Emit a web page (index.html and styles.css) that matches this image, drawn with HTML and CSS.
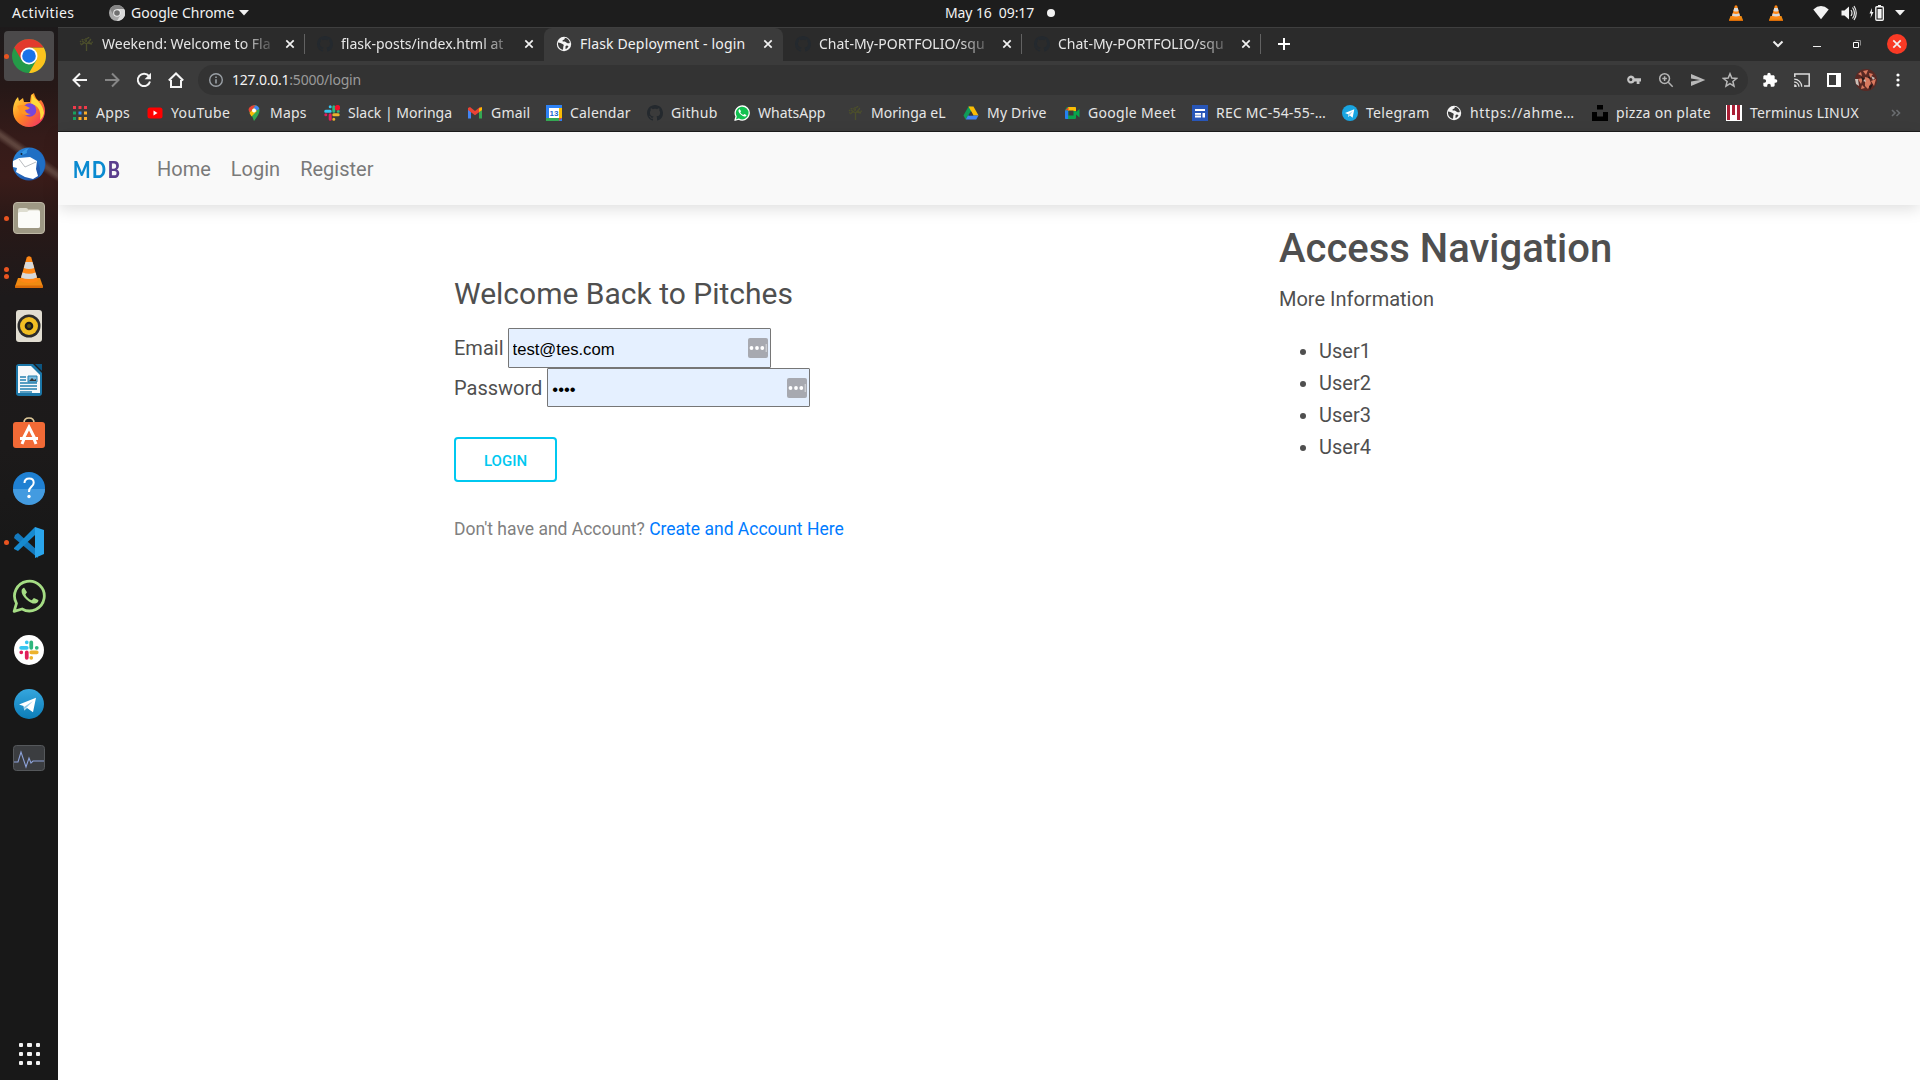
FILE: index.html
```html
<!DOCTYPE html>
<html lang="en">
<head>
<meta charset="utf-8">
<title>Flask Deployment - login</title>
<link rel="stylesheet" href="styles.css">
</head>
<body>
<svg class="defs" aria-hidden="true">
  <defs>
    <linearGradient id="gold" x1="0" y1="0" x2="1" y2="1"><stop offset="0" stop-color="#ffe94a"/><stop offset=".45" stop-color="#ff8a1f"/><stop offset="1" stop-color="#f0246f"/></linearGradient>
    <linearGradient id="sky" x1="0" y1="0" x2="0" y2="1"><stop offset="0" stop-color="#35a6de"/><stop offset="1" stop-color="#0c7db8"/></linearGradient>
    <linearGradient id="bird" x1="0" y1="0" x2="1" y2="1"><stop offset="0" stop-color="#2a8de0"/><stop offset="1" stop-color="#1c459c"/></linearGradient>
  </defs>
  <symbol id="close" viewBox="0 0 10 10"><path d="M1.3 1.3l7.4 7.4M8.7 1.3L1.3 8.7" stroke="currentColor" stroke-width="1.7"/></symbol>
  <symbol id="github" viewBox="0 0 16 16"><path fill="#24292e" d="M8 0C3.58 0 0 3.58 0 8c0 3.54 2.29 6.53 5.47 7.59.4.07.55-.17.55-.38 0-.19-.01-.82-.01-1.49-2.01.37-2.53-.49-2.69-.94-.09-.23-.48-.94-.82-1.13-.28-.15-.68-.52-.01-.53.63-.01 1.08.58 1.23.82.72 1.21 1.87.87 2.33.66.07-.52.28-.87.51-1.07-1.78-.2-3.64-.89-3.64-3.95 0-.87.31-1.59.82-2.15-.08-.2-.36-1.02.08-2.12 0 0 .67-.21 2.2.82.64-.18 1.32-.27 2-.27s1.36.09 2 .27c1.53-1.04 2.2-.82 2.2-.82.44 1.1.16 1.92.08 2.12.51.56.82 1.27.82 2.15 0 3.07-1.87 3.75-3.65 3.95.29.25.54.73.54 1.48 0 1.07-.01 1.93-.01 2.2 0 .21.15.46.55.38A8.01 8.01 0 0016 8c0-4.42-3.58-8-8-8z"/></symbol>
  <symbol id="palm" viewBox="0 0 16 16"><g fill="none" stroke="#4c4f2c" stroke-width="1.3"><path d="M8.5 15V8M8.5 8L4 5M8.5 8l4-4M8 6V2M3 9l3-2M14 8l-4-1"/><path stroke-dasharray="1.5 1" d="M2 6l3-3 3 2 2-4 3 3M2 8l3-1M11 7l4-1"/></g></symbol>
  <symbol id="globe" viewBox="0 0 16 16"><circle cx="8" cy="8" r="7.2" fill="#f5f5f5"/><path fill="#3b3b3b" d="M2 6.5c2 0 3 1 4.500 1.500 1.500.3 1.500 1.700.8 2.500l-.3 3.200C4 13.300 1.600 10.500 2 6.500zM8.500 1.800c1 1-.5 2-1.500 2.200-.8.500-.6 1.500.4 1.600 1.600-.2 2.600.6 3.600 1.400 1.100.6 2 .3 2.800 0-.1-2.600-2.300-5-5.300-5.200zM9.500 10.200c1-.9 2.200-.7 3 .2-.6 1.200-1.700 2.200-3 2.700z"/></symbol>
  <symbol id="vlc" viewBox="0 0 32 32"><path fill="#f08a12" d="M5 22h22l3 8.500q0 1.500-1.500 1.500h-25Q2 32 2 30.500z"/><path fill="#d96b08" d="M2 29.500h28v1q0 1.500-1.500 1.500h-25Q2 32 2 30.500z"/><path fill="#ff8715" d="M13.700 1.500Q16-1 18.300 1.500L25 25q-9 4-18 0z"/><path fill="#d8dadb" d="M12.500 6h7l1.700 6q-5.200 2-10.400 0zM9.500 16.500q6.500 2.500 13 0l1.500 5q-8 3-16 0z"/></symbol>
  <symbol id="slack" viewBox="0 0 16 16"><g stroke-width="3" stroke-linecap="round"><path stroke="#36c5f0" d="M1.700 6.200h4.500M6.200 1.800v.01"/><path stroke="#2eb67d" d="M9.800 1.800v4.400M14.200 6.200h.01"/><path stroke="#ecb22e" d="M9.800 9.800h4.400M9.800 14.200h.01"/><path stroke="#e01e5a" d="M6.200 9.800v4.400M1.800 9.800h.01"/></g></symbol>
  <symbol id="plane" viewBox="0 0 16 16"><circle cx="8" cy="8" r="8" fill="#19a5e1"/><path fill="#fff" d="M3 7.900l9.300-3.700-1.700 8.500-2.800-2.100-1.500 1.400-.3-2.700z"/><path fill="#9ed5f0" d="M6 9.300l4.800-3.400-3.200 4.500-1.300 1.600z"/></symbol>
  <symbol id="phone" viewBox="0 0 32 32"><path d="M2 30.500l2.200-7.600A14 14 0 1 1 9.500 28.200z" fill="var(--bubble,none)" stroke="var(--ring)" stroke-width="2.600" stroke-linejoin="round"/><path fill="var(--ring)" d="M11.500 8.300c-.8-.3-2.300 1.100-2.500 2.700-.3 2.500 1.600 5.400 4.600 8.200 3.300 3 6.800 4.600 9 3.700 1.700-.7 2.500-2 2.200-3.100l-4.200-2-2 2.300c-2.500-.8-5-3.200-6-5.600l1.500-2z"/></symbol>
</svg>

<header class="topbar">
  <span class="activities">Activities</span>
  <svg class="i16 app-ico" viewBox="0 0 16 16"><circle cx="8" cy="8" r="8" fill="#a8a8a8"/><path d="M8 4h7.200A8 8 0 018 16l3.500-6z" fill="#dadada"/><path d="M1 4a8 8 0 0114 0H8L4.500 10z" fill="#858585"/><circle cx="8" cy="8" r="3.800" fill="#eee"/><circle cx="8" cy="8" r="2.800" fill="#707070"/></svg>
  <span class="app-name">Google Chrome</span>
  <svg class="caret" viewBox="0 0 10 6"><path d="M0 0h10L5 5.500z" fill="#f2f2f2"/></svg>
  <span class="clock">May 16&nbsp; 09:17</span>
  <span class="dot"></span>
  <div class="tray">
    <svg class="i16"><use href="#vlc"/></svg>
    <svg class="i16"><use href="#vlc"/></svg>
    <svg class="i16" viewBox="0 0 16 16"><path d="M.3 4.500Q8-2.300 15.700 4.500L8 14.300z" fill="#f2f2f2"/></svg>
    <svg class="i16" viewBox="0 0 16 16"><path d="M.5 5.500h3L8 1.500v13l-4.500-4h-3z" fill="#f2f2f2"/><path d="M10 5q2 3 0 6M11.500 2.500q4 5.500 0 11M13 1q4.500 7 0 14" fill="none" stroke="#e6e6e6" stroke-width="1.200"/></svg>
    <svg class="i16" viewBox="0 0 16 16"><path d="M3 3L.5 8.500h1.700L1.500 13 4.500 7H2.800z" fill="#f2f2f2"/><rect x="6.800" y="1.800" width="7.500" height="13.400" rx="1" fill="none" stroke="#f2f2f2" stroke-width="1.400"/><path d="M9 0h3v2H9zM8.600 4h4v9.500h-4z" fill="#f2f2f2"/></svg>
    <svg class="caret" viewBox="0 0 10 6"><path d="M0 0h10L5 5.500z" fill="#f2f2f2"/></svg>
  </div>
</header>

<div class="desktop">
<aside class="dock">
  <div class="app selected run"><svg class="i34" viewBox="0 0 34 34"><circle cx="17" cy="17" r="17" fill="#249a48"/><path d="M17 8.500h14.700A17 17 0 0117 34l7.400-12.700z" fill="#fcc31e"/><path d="M2.300 8.500a17 17 0 0129.400 0H17L9.600 21.300z" fill="#e23a2e"/><circle cx="17" cy="17" r="8.500" fill="#fff"/><circle cx="17" cy="17" r="6.800" fill="#1a73e8"/></svg></div>
  <div class="app"><svg class="i34" viewBox="0 0 34 34"><path d="M1 18C1 12 3 7 6 4l1 4 4-3 1 4 6 0 1-7 3-2q1 5 5 8l2-1q4 5 4 11A16 16 0 011 18z" fill="url(#gold)"/><path d="M20 1q2 4 6 7 5 5 6 12-1 5-4 7 2-14-9-16z" fill="#ffd93b"/><circle cx="17.500" cy="17" r="6.800" fill="#7746dc"/><path d="M5 13q6-2 9 0l4 2q-2 2-5 2 1 4 6 4-7 3-11-2z" fill="#ff9522"/></svg></div>
  <div class="app"><svg class="i34" viewBox="0 0 34 34"><circle cx="17" cy="17" r="16.500" fill="url(#bird)"/><path d="M9 9q3-7 9-8 15 3 15 17-1 8-6 12 5-20-18-21z" fill="#1f6fc4"/><path d="M1 14l6-3 11-1 7 4-1 8 2 7-5 3-8-2-9-5 1-4-4-1z" fill="#fff"/><path d="M7 12l6 8 11-5" fill="none" stroke="#b9bcc0" stroke-width="1"/><path d="M8 9q2-6 9-8-3 3-2 5z" fill="#3797e3"/><circle cx="9.500" cy="7" r="1" fill="#123"/></svg></div>
  <div class="app run"><svg class="i34" viewBox="0 0 34 34"><rect x="1.500" y="1.500" width="31" height="31" rx="3.500" fill="#9e9884" stroke="#bdb7a5"/><path d="M6 9q0-2 2-2h6q2 0 2 1.500h10q2 0 2 2V25q0 2-2 2H8q-2 0-2-2z" fill="#deddd0"/><path d="M6 12.500q0-1.500 2-1.500h7l2-1.500h9q2 0 2 2V25q0 2-2 2H8q-2 0-2-2z" fill="#fbfbf8"/></svg></div>
  <div class="app run two"><svg class="i34" viewBox="-1 -1 34 34"><use href="#vlc" width="32" height="32"/></svg></div>
  <div class="app"><svg class="i34" viewBox="0 0 34 34"><rect x="4" y="1" width="26" height="32" rx="3" fill="#e1ddd1"/><circle cx="17" cy="17" r="11.500" fill="#2b2b2b"/><circle cx="17" cy="17" r="9" fill="#f1be23"/><circle cx="17" cy="17" r="4.300" fill="#1a1a1a"/><circle cx="17" cy="17" r="2" fill="#58500e"/></svg></div>
  <div class="app"><svg class="i34" viewBox="0 0 34 34"><path d="M7 1h14l9 9v20q0 3-3 3H7q-3 0-3-3V4q0-3 3-3z" fill="#1c77a8"/><path d="M23 1h7v7z" fill="#0d5580"/><path d="M6 3h13l9 9v18H6z" fill="#f7f9fa"/><path d="M8 14h6M8 17h6M8 20h17M8 23h17M8 26h17M8 29h12" stroke="#2580b0" stroke-width="1.400"/><path d="M16 13h9v6h-9z" fill="#78b9dc" stroke="#2580b0"/><path d="M17 18l3-3 2 2 2-1v2z" fill="#333"/></svg></div>
  <div class="app"><svg class="i34" viewBox="0 0 34 34"><path d="M12 6q0-5 5-5t5 5" fill="none" stroke="#dfca9a" stroke-width="1.700"/><rect x="1" y="5" width="32" height="26" rx="3" fill="#f26a36"/><path d="M11 22l6-12 6 12M8 21.500h18M12 22l-2 5M22 22l2 5" fill="none" stroke="#fff" stroke-width="3"/></svg></div>
  <div class="app"><svg class="i34" viewBox="0 0 34 34"><circle cx="17" cy="17" r="16" fill="#1f80d2"/><path d="M1 18h32a16 16 0 01-32 0z" fill="#439be0"/><path d="M12.500 12q0-4.500 4.700-4.500 4.500 0 4.500 4.200 0 2.300-2.400 4.200-2.300 1.900-2.300 5" fill="none" stroke="#fff" stroke-width="2"/><circle cx="17" cy="25.500" r="1.700" fill="#fff"/></svg></div>
  <div class="app run"><svg class="i34" viewBox="0 0 34 34"><path d="M3 10l3-2 20 18v7L2 13z" fill="#1479bd"/><path d="M2 23L23 2v8L6 26l-4-2z" fill="#168ad0"/><path d="M23 2l9 3v24l-9 4z" fill="#2aa5ec"/></svg></div>
  <div class="app wa"><svg class="i34"><use href="#phone"/></svg></div>
  <div class="app"><svg class="i34" viewBox="0 0 34 34"><circle cx="17" cy="17" r="15" fill="#fff"/><use href="#slack" x="7" y="7" width="20" height="20"/></svg></div>
  <div class="app"><svg class="i34" viewBox="0 0 34 34"><circle cx="17" cy="17" r="15" fill="url(#sky)"/><path fill="#fff" d="M7 17.500l17-6.700-3 14.500-6-4.300-2.800 2.500-.7-4.500z"/><path d="M12 20l9-6-7 7-1.800 2.500z" fill="#93cbe9"/></svg></div>
  <div class="app"><svg class="i34" viewBox="0 0 34 34"><rect x="1.500" y="4.500" width="31" height="25" rx="3" fill="#3b3d40" stroke="#55585b"/><path d="M2 21h4l3-10 5 15 3-9 2 5 2-2h11" fill="none" stroke="#8da2d8" stroke-width="1.100"/></svg></div>
  <div class="show-apps"><i></i><i></i><i></i><i></i><i></i><i></i><i></i><i></i><i></i></div>
</aside>

<main class="window">
  <div class="tabs">
    <div class="tab"><svg class="i16"><use href="#palm"/></svg><span>Weekend: Welcome to Fla</span><svg class="x"><use href="#close"/></svg></div>
    <div class="tab nosep"><svg class="i16"><use href="#github"/></svg><span>flask-posts/index.html at</span><svg class="x"><use href="#close"/></svg></div>
    <div class="tab active"><svg class="i16"><use href="#globe"/></svg><span>Flask Deployment - login</span><svg class="x"><use href="#close"/></svg></div>
    <div class="tab"><svg class="i16"><use href="#github"/></svg><span>Chat-My-PORTFOLIO/squ</span><svg class="x"><use href="#close"/></svg></div>
    <div class="tab"><svg class="i16"><use href="#github"/></svg><span>Chat-My-PORTFOLIO/squ</span><svg class="x"><use href="#close"/></svg></div>
    <svg class="plus" viewBox="0 0 12 12"><path d="M6 0v12M0 6h12" stroke="#fff" stroke-width="2"/></svg>
    <div class="winctl">
      <svg viewBox="0 0 16 16"><path d="M3.500 5.500L8 10l4.500-4.500" fill="none" stroke="#eee" stroke-width="2"/></svg>
      <svg viewBox="0 0 16 16"><path d="M4 10.500h8" stroke="#eee"/></svg>
      <svg viewBox="0 0 16 16"><path d="M6.500 4.500h5v5" fill="none" stroke="#888"/><path d="M4.500 6.500h5v5h-5z" fill="none" stroke="#fff"/></svg>
      <span class="quit"><svg class="x"><use href="#close"/></svg></span>
    </div>
  </div>

  <div class="toolbar">
    <svg class="i16" viewBox="0 0 16 16"><path d="M15 8H2M8 1.500L1.500 8 8 14.500" fill="none" stroke="#f5f5f5" stroke-width="2"/></svg>
    <svg class="i16" viewBox="0 0 16 16"><path d="M1 8h13M8 1.500L14.500 8 8 14.500" fill="none" stroke="#868686" stroke-width="2"/></svg>
    <svg class="i16" viewBox="0 0 16 16"><path d="M13 4.200A6.200 6.200 0 1014 9.500" fill="none" stroke="#f5f5f5" stroke-width="2"/><path d="M15 .8v6.400H8.600z" fill="#f5f5f5"/></svg>
    <svg class="i16" viewBox="0 0 16 16"><path d="M3 8v7h10V8M.8 8.500L8 1.500l7.200 7" fill="none" stroke="#f5f5f5" stroke-width="2"/></svg>
    <div class="omnibox">
      <svg class="i16" viewBox="0 0 16 16"><circle cx="8" cy="8" r="6.300" fill="none" stroke="#9aa0a6" stroke-width="1.400"/><path d="M7.200 4.500h1.600v1.600H7.200zM7.200 7.200h1.600v4.300H7.200z" fill="#9aa0a6"/></svg>
      <span class="url"><b>127.0.0.1</b>:5000/login</span>
      <svg class="i16" viewBox="0 0 16 16"><path fill="#c4c4c4" fill-rule="evenodd" d="M4.800 3.500a4 4 0 013.800 2.800H15v3.200h-1.500V12h-2.800V9.500H8.600A4 4 0 114.800 3.500zm0 2.500a1.600 1.600 0 100 3.200 1.600 1.600 0 000-3.200z"/></svg>
      <svg class="i16" viewBox="0 0 16 16"><g fill="none" stroke="#b4b4b4" stroke-width="1.500"><circle cx="6.600" cy="6.600" r="4.900"/><path d="M10.300 10.300l4.400 4.400M4.300 6.600h4.600M6.600 4.300v4.600"/></g></svg>
      <svg class="i16" viewBox="0 0 16 16"><path fill="#b8b8b8" d="M1 2l14.300 6L1 14V9.500L10 8 1 6.500z"/></svg>
      <svg class="i16" viewBox="0 0 16 16"><path d="M8 1.800l1.800 4.300 4.700.4-3.600 3 1.100 4.600L8 11.600l-4 2.500 1.100-4.600-3.600-3 4.700-.4z" fill="none" stroke="#b8b8b8" stroke-width="1.500"/></svg>
    </div>
    <div class="actions">
      <svg class="i16" viewBox="0 0 24 24"><path fill="#fff" d="M20.500 11H19V7c0-1.100-.9-2-2-2h-4V3.500a2.500 2.500 0 00-5 0V5H4c-1.100 0-2 .9-2 2v3.800h1.500a2.700 2.700 0 010 5.400H2V20c0 1.100.9 2 2 2h3.800v-1.500a2.700 2.700 0 015.400 0V22H17c1.100 0 2-.9 2-2v-4h1.500a2.500 2.500 0 000-5z"/></svg>
      <svg class="i16" viewBox="0 0 16 16"><path d="M.8 5V2h14.400v12H10" fill="none" stroke="#ddd" stroke-width="1.500"/><path d="M.2 7.200a7.500 7.500 0 017.500 7.500M.2 10a5 5 0 014.800 4.800" fill="none" stroke="#ddd" stroke-width="1.300"/><path d="M.2 12.300A2.500 2.500 0 012.700 15H.2z" fill="#ddd"/></svg>
      <svg class="i16" viewBox="0 0 16 16"><path fill="#fff" fill-rule="evenodd" d="M1 1h14v14H1zm2 2v10h7V3z"/></svg>
      <svg class="avatar" viewBox="0 0 22 22"><circle cx="11" cy="11" r="11" fill="#5a2924"/><path d="M3 5l3-2 1 4zM8 2l5-1-2 5zM14 4l4 1-3 4zM3 10l5-1-2 6zM10 8l4 1 2 5-3 6-3-3zM7 16l3 3-4 1zM16 12l5-2-2 7z" fill="#d9795f"/><path d="M0 10h3l1 7-3-2zM16 7l4 2-2 2zM8 12l2-2 1 3z" fill="#c9c0b9"/><path d="M6 8l3 1-1 4zM14 7l2 3-3-1zM14 17l4-2-3 6z" fill="#231918"/></svg>
      <svg class="i16" viewBox="0 0 16 16"><g fill="#fff"><circle cx="8" cy="3" r="1.600"/><circle cx="8" cy="8" r="1.600"/><circle cx="8" cy="13" r="1.600"/></g></svg>
    </div>
  </div>

  <nav class="bookmarks">
    <a class="ls3"><svg class="i16" viewBox="0 0 16 16"><g><path fill="#f03a4a" d="M1 1h3v3H1zM6.500 1h3v3h-3zM12 1h3v3h-3z"/><path fill="#18a05e" d="M1 6.500h3v3H1zM1 12h3v3H1z"/><path fill="#2f8df5" d="M6.500 6.500h3v3h-3z"/><path fill="#f9ab2a" d="M12 6.500h3v3h-3zM6.500 12h3v3h-3zM12 12h3v3h-3z"/></g></svg><span>Apps</span></a>
    <a class="ls4"><svg class="i16" viewBox="0 0 16 16"><rect x=".5" y="2.500" width="15" height="11" rx="2.500" fill="#f00"/><path d="M6.500 5.500v5l4-2.500z" fill="#fff"/></svg><span>YouTube</span></a>
    <a class="ls2"><svg class="i16" viewBox="0 0 16 16"><path d="M8 0q5.500.5 5.500 5.500Q13.500 9 8 16q-1-4-3.500-7Q2.500 6 3 4z" fill="#34a853"/><path d="M3.500 2.500Q6-.5 9.800.3L4 7.500Q1.500 5 3.500 2.500z" fill="#e94335"/><path d="M9.800.3q3 1 3.500 3.500L10 6 7.500 3z" fill="#4285f4"/><path d="M3.500 8L8 3l3 3-5.500 5.500z" fill="#fbbc04"/><circle cx="8" cy="5.500" r="2" fill="#fff"/></svg><span>Maps</span></a>
    <a><svg class="i16" viewBox="0 0 16 16"><use href="#slack"/><circle cx="13.500" cy="2.800" r="2.700" fill="#f0102a"/></svg><span>Slack | Moringa</span></a>
    <a class="ls2"><svg class="i16" viewBox="0 0 16 16"><path d="M1 4v9.500h3V7z" fill="#4285f4"/><path d="M15 4v9.500h-3V7z" fill="#34a853"/><path d="M1 3l2-1 5 4 5-4 2 1v2L8 10.200 1 5z" fill="#ea4335"/><path d="M12 3.500L15 2v3l-3 2z" fill="#fbbc04"/></svg><span>Gmail</span></a>
    <a class="ls2"><svg class="i16" viewBox="0 0 16 16"><path fill="#2d82f5" d="M0 0h16v16H0z"/><path fill="#fbbc04" d="M13 3h3v10h-3z"/><path fill="#34a853" d="M0 13h13v3H0z"/><path fill="#ea4335" d="M13 13h3l-3 3z"/><path fill="#fff" d="M3 3h10v10H3z"/><text x="8" y="11" text-anchor="middle" class="day">13</text></svg><span>Calendar</span></a>
    <a class="ls3"><svg class="i16"><use href="#github"/></svg><span>Github</span></a>
    <a class="wa-fill"><svg class="i16"><use href="#phone"/></svg><span>WhatsApp</span></a>
    <a><svg class="i16"><use href="#palm"/></svg><span>Moringa eL</span></a>
    <a class="ls2"><svg class="i16" viewBox="0 0 16 16"><path fill="#0f9d58" d="M5.500 1.500h2.800L8 6l-5.300 8.500L.5 10.500z"/><path fill="#fbbc04" d="M5.500 1.500h5l5 9h-5z"/><path fill="#4285f4" d="M2.700 14.500l2.300-4h10.500l-2.300 4z"/><path fill="#3b3b3b" d="M8 6.500l2.300 4H5.700z"/></svg><span>My Drive</span></a>
    <a class="ls3"><svg class="i16" viewBox="0 0 16 16"><path fill="#0aa34c" d="M3 2h8q1 0 1 1v10q0 1-1 1H2q-1 0-1-1V5zM12 7l3.500-3v8.500L12 9.500z"/><path fill="#fbbc04" d="M4 2h7q1 0 1 1v3H4z"/><path fill="#ea4335" d="M1 5.500L4.500 2v3.500z"/><path fill="#2580ef" d="M1 5.500h3.200V14H2q-1 0-1-1z"/><path fill="#3b3b3b" d="M4.500 5.500h5v5h-5z"/></svg><span>Google Meet</span></a>
    <a class="ls2"><svg class="i16" viewBox="0 0 16 16"><path fill="#2856b8" d="M0 0h16v16H0z"/><path fill="#fff" d="M3 4h10v2H3zM3 8h6v4.500H3zM10.500 8H13v4.500h-2.500z"/><path fill="#2856b8" d="M3 9.800h6v.7H3z"/></svg><span>REC MC-54-55-…</span></a>
    <a class="ls3"><svg class="i16"><use href="#plane"/></svg><span>Telegram</span></a>
    <a class="ls6"><svg class="i16"><use href="#globe"/></svg><span>https://ahme…</span></a>
    <a class="ls3"><svg class="i16" viewBox="0 0 16 16"><path d="M5 0h6v4.500H5zM0 7h5v4.500h6V7h5v9H0z"/></svg><span>pizza on plate</span></a>
    <a class="ls2"><svg class="i16" viewBox="0 0 16 16"><path fill="#fff" d="M0 0h16v16H0z"/><path fill="#a91f35" d="M1 0h3v15H1zM6 0h3v10H6zM11 0h3v15h-3z"/></svg><span>Terminus LINUX</span></a>
    <svg class="more" viewBox="0 0 10 8"><path d="M1 1l3 3-3 3M5.500 1l3 3-3 3" fill="none" stroke="#6a6d70" stroke-width="1.600"/></svg>
  </nav>

  <section class="page">
    <nav class="navbar">
      <span class="logo">MD<em>B</em></span>
      <a>Home</a><a>Login</a><a>Register</a>
    </nav>
    <div class="content">
      <form class="login">
        <h3>Welcome Back to Pitches</h3>
        <div class="field"><label>Email</label><div class="box"><input type="text" value="test@tes.com"><svg viewBox="0 0 20 20"><rect width="20" height="20" rx="2" fill="#a7a9b0"/><g fill="#fff"><circle cx="3.500" cy="10" r="1.900"/><circle cx="9" cy="10" r="1.900"/><circle cx="14.300" cy="10" r="1.900"/><path d="M17.700 6h1v8h-1z" opacity=".6"/></g></svg></div></div>
        <div class="field second"><label>Password</label><div class="box"><input type="password" value="test"><svg viewBox="0 0 20 20"><rect width="20" height="20" rx="2" fill="#a7a9b0"/><g fill="#fff"><circle cx="3.500" cy="10" r="1.900"/><circle cx="9" cy="10" r="1.900"/><circle cx="14.300" cy="10" r="1.900"/><path d="M17.700 6h1v8h-1z" opacity=".6"/></g></svg></div></div>
        <button type="button">LOGIN</button>
        <p>Don't have and Account? <a>Create and Account Here</a></p>
      </form>
      <section class="side">
        <h2>Access Navigation</h2>
        <p>More Information</p>
        <ul><li>User1</li><li>User2</li><li>User3</li><li>User4</li></ul>
      </section>
    </div>
  </section>
</main>
</div>
</body>
</html>
```
FILE: styles.css
```css
* { box-sizing: border-box; }
body { margin: 0; width: 1920px; height: 1080px; overflow: hidden; background: #fff; font-family: "Noto Sans", sans-serif; font-size: 14px; display: flex; flex-direction: column; }
svg { flex: none; display: block; }
.defs { position: absolute; width: 0; height: 0; }
.i16 { width: 16px; height: 16px; }
.i34 { width: 34px; height: 34px; }
.x { width: 10px; height: 10px; color: #f2f2f2; }

/* desktop top bar */
.topbar { height: 27px; flex: none; background: #1d1d1d; color: #f2f2f2; display: flex; align-items: center; padding: 0 15px 1px 12px; white-space: nowrap; }
.activities { width: 97px; letter-spacing: .4px; }
.app-name { width: 103px; margin: 0 5px 0 6px; }
.caret { width: 10px; height: 6px; }
.clock { margin-left: 696px; width: 90px; letter-spacing: -.1px; }
.topbar span:not(.dot) { padding-bottom: 1px; }
.dot { width: 8px; height: 8px; border-radius: 50%; background: #f2f2f2; margin-left: 12px; }
.tray { margin-left: auto; display: flex; align-items: center; gap: 12px; }
.tray svg:nth-child(1) { margin-right: 12px; }
.tray svg:nth-child(2) { margin-right: 17px; }
.tray svg:nth-child(5) { margin-right: -2px; }

/* dock */
.desktop { flex: 1; display: flex; min-height: 0; }
.dock { width: 58px; flex: none; display: flex; flex-direction: column; align-items: center; padding: 4px 0 15px;
  background:
    linear-gradient(215deg, transparent 44%, rgba(115,90,80,.65) 49%, rgba(115,90,80,.65) 51%, transparent 56%) 0 88px / 58px 80px no-repeat,
    linear-gradient(#1d1a1b 0, #261817 60px, #351b19 110px, #3a1c19 150px, #271817 200px, #1d1a1b 270px, #1c1a1a 420px, #181818 520px); }
.app { width: 50px; height: 50px; margin-bottom: 4px; border-radius: 4px; display: flex; align-items: center; justify-content: center; position: relative; flex: none; }
.selected { background: #4b494a; }
.run::before { content: ""; position: absolute; left: 0; top: 23px; width: 5px; height: 5px; border-radius: 50%; background: #e95420; }
.two::before { top: 20px; box-shadow: 0 7px #e95420; }
.wa { --ring: #a5dd84; }
.show-apps { margin-top: auto; display: grid; grid-template-columns: repeat(3, 4px); gap: 4.500px; }
.show-apps i { width: 4.500px; height: 4.500px; border-radius: 1px; background: #f2f2f2; }

/* browser window */
.window { flex: 1; min-width: 0; display: flex; flex-direction: column; background: #3b3b3b; }
.tabs { height: 34px; flex: none; background: #2b2b2b; border-top: 1px solid #3f3f3f; display: flex; align-items: center; padding-left: 8px; color: #e6e6e6; }
.tab { width: 239px; height: 33px; display: flex; align-items: center; padding: 0 10px 1px 12px; position: relative; }
.tab::after { content: ""; position: absolute; right: 0; top: 6px; width: 1px; height: 20px; background: #626262; }
.nosep::after, .active::after { display: none; }
.tab span { width: 174px; margin: 0 9px 0 8px; padding-bottom: 1px; white-space: nowrap; mask-image: linear-gradient(90deg, #000 140px, transparent 176px); }
.active span { mask-image: none; letter-spacing: .15px; }
.active { background: #3b3b3b; border-radius: 8px 8px 0 0; color: #f2f2f2; }
.plus { width: 12px; height: 12px; margin: 0 0 1px 17px; }
.winctl { margin-left: auto; display: flex; align-items: center; padding: 0 13px 1px 0; }
.winctl > svg { width: 16px; height: 16px; margin-right: 24px; }
.winctl > svg:nth-child(1) { margin-right: 23px; }
.quit { width: 20px; height: 20px; border-radius: 50%; background: #f93a25; display: grid; place-items: center; margin-left: -2px; }

.toolbar { height: 38px; flex: none; display: flex; align-items: center; gap: 16px; padding: 0 14px; }
.omnibox { width: 1550px; height: 30px; border-radius: 15px; background: #333; display: flex; align-items: center; gap: 16px; padding: 0 10px; margin-left: -2px; }
.url { flex: 1; margin-left: -8px; padding-bottom: 1px; color: #9a9a9a; letter-spacing: -.22px; }
.url b { font-weight: 400; color: #f2f2f2; }
.actions { display: flex; align-items: center; gap: 16px; margin-left: -2px; }
.avatar { width: 22px; height: 22px; margin: 0 -3px; }

.bookmarks { height: 33px; flex: none; display: grid; align-items: center; padding: 0 0 5px 14px; border-bottom: 1px solid #1d1d1d; color: #e6e6e6; white-space: nowrap;
  grid-template-columns: 75px 99px 78px 143px 79px 101px 87px 113px 116px 101px 128px 150px 104px 146px 134px 165px 10px; }
.bookmarks a { display: flex; align-items: center; gap: 8px; }
.bookmarks span { padding-bottom: 1px; }
.ls2 { letter-spacing: .2px; }
.ls3 { letter-spacing: .3px; }
.ls4 { letter-spacing: .4px; }
.ls6 { letter-spacing: .6px; }
.wa-fill { --ring: #fff; --bubble: #12c150; }
.day { font: bold 8px "Liberation Sans", sans-serif; letter-spacing: 0; fill: #1967d2; }
.more { width: 10px; height: 8px; }

/* web page */
.page { flex: 1; background: #fff; font-family: Roboto, sans-serif; font-size: 20px; line-height: 32px; color: #4f4f4f; }
.navbar { height: 73px; background: #f9f9f9; display: flex; align-items: center; padding-left: 15px; gap: 20px; color: #7a7a7a; box-shadow: 0 4px 15px rgba(0,0,0,.13); }
.logo { width: 64px; font: 900 23px/30px Lato, sans-serif; letter-spacing: 2px; color: #0a8ad0; transform: scaleX(.8); transform-origin: 0 50%; }
.logo em { font-style: normal; color: #5b3e8e; }
.content { display: flex; }
.login { width: 825px; margin-left: 396px; padding-top: 69px; }
.login h3 { font-size: 30px; line-height: 40px; font-weight: 400; margin: 0 0 14px; }
.field { display: flex; align-items: center; gap: 4px; height: 40px; }
.second { gap: 5px; }
.box { position: relative; }
.box input { display: block; width: 263px; height: 40px; border: 1px solid #767676; border-radius: 1px; background: #e5f0ff; padding: 4px 4px 0; font: 16.67px "Liberation Sans", sans-serif; color: #000; }
.second input { height: 39px; margin-bottom: 1px; }
.box svg { position: absolute; right: 3px; top: 10px; width: 20px; height: 20px; }
.login button { display: block; margin: 29px 0 0; width: 103px; height: 45px; border: 2px solid #00c8f0; border-radius: 4px; background: none; color: #00c8f0; font: 500 15px Roboto, sans-serif; padding: 2px 0 0; }
.login p { margin: 31px 0 0; font-size: 17.500px; color: #808080; }
.login p a { color: #007bff; }
.side { padding-top: 20px; }
.side h2 { margin: 0 0 10px; font-size: 40px; line-height: 48px; font-weight: 500; }
.side p { margin: 0 0 20px; }
.side ul { margin: 0; padding-left: 40px; }
```
